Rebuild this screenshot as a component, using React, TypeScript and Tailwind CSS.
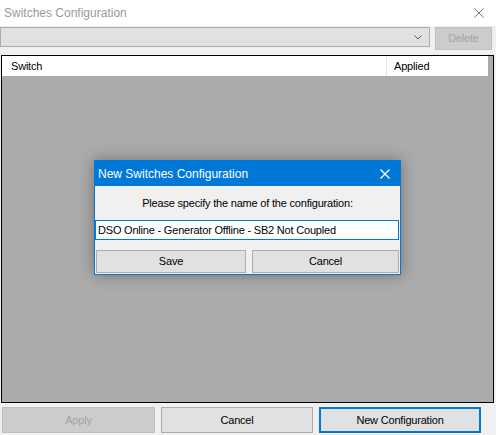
const ui = { fontFamily: '"Liberation Sans", Arial, sans-serif' };

function WinButton({
  label,
  className,
  disabled,
  focused,
}: {
  label: string;
  className: string;
  disabled?: boolean;
  focused?: boolean;
}) {
  const look = disabled
    ? "bg-[#cccccc] border-[#bfbfbf] text-[#a3a3a3]"
    : focused
      ? "bg-[#e1e1e1] border-2 border-[#0078d7] text-black"
      : "bg-[#e1e1e1] border-[#adadad] text-black";
  return (
    <div
      className={`flex items-center justify-center border text-[11px] tracking-[-0.2px] ${look} ${className}`}
    >
      {label}
    </div>
  );
}

function CloseIcon({ color, size, width }: { color: string; size: number; width: number }) {
  return (
    <svg width={size} height={size} viewBox="0 0 10 10">
      <path d="M0.5 0.5L9.5 9.5M9.5 0.5L0.5 9.5" stroke={color} strokeWidth={width} fill="none" />
    </svg>
  );
}

export default function App() {
  return (
    <div className="relative h-[435px] w-[496px] overflow-hidden bg-[#f0f0f0]" style={ui}>
      {/* window title */}
      <div className="flex h-[26px] items-center justify-between bg-white pl-[4px] pr-[12px]">
        <span className="text-[12px] text-[#999999]">Switches Configuration</span>
        <CloseIcon color="#7a7a7a" size={10} width={1} />
      </div>

      {/* combo + delete */}
      <div className="mt-[1px] flex items-start">
        <div className="flex h-[20px] w-[430px] items-center justify-end border border-[#adadad] bg-[#e1e1e1] pr-[7px]">
          <svg width="8" height="5" viewBox="0 0 8 5">
            <path d="M0.5 0.5L4 4L7.5 0.5" stroke="#555" strokeWidth="1" fill="none" />
          </svg>
        </div>
        <WinButton label="Delete" disabled className="ml-[5px] h-[23px] w-[57px]" />
      </div>

      {/* list view */}
      <div className="ml-[1px] mt-[5px] flex h-[348px] w-[493px] flex-col border border-black bg-[#ababab]">
        <div className="flex h-[20px] w-[486px] bg-white text-[11px] tracking-[-0.2px] text-black">
          <div className="flex w-[385px] items-center border-r border-[#e5e5e5] pl-[9px]">Switch</div>
          <div className="flex flex-1 items-center pl-[7px]">Applied</div>
        </div>
      </div>

      {/* bottom buttons */}
      <div className="mt-[4px] flex pl-[2px]">
        <WinButton label="Apply" disabled className="h-[26px] w-[153px]" />
        <WinButton label="Cancel" className="ml-[6px] h-[26px] w-[152px]" />
        <WinButton label="New Configuration" focused className="ml-[6px] h-[26px] w-[162px]" />
      </div>

      {/* modal dialog */}
      <div className="absolute left-[94px] top-[160px] w-[307px] border border-[#0078d7] bg-[#f0f0f0] shadow-[0_0_14px_rgba(0,0,0,0.35)]">
        <div className="flex h-[25px] items-center justify-between bg-[#0078d7] pl-[3px] pr-[10px]">
          <span className="text-[12px] text-white">New Switches Configuration</span>
          <CloseIcon color="#ffffff" size={10} width={1.3} />
        </div>
        <div className="flex h-[34px] items-center justify-center text-[11px] tracking-[-0.2px] text-black">
          Please specify the name of the configuration:
        </div>
        <div className="mr-[1px] flex h-[20px] items-center border border-[#0078d7] bg-white pl-[2px] text-[11px] tracking-[-0.2px] text-black">
          DSO Online - Generator Offline - SB2 Not Coupled
        </div>
        <div className="mb-[1px] mt-[10px] flex">
          <WinButton label="Save" className="ml-[1px] h-[23px] w-[150px]" />
          <WinButton label="Cancel" className="ml-[6px] h-[23px] w-[147px]" />
        </div>
      </div>
    </div>
  );
}
